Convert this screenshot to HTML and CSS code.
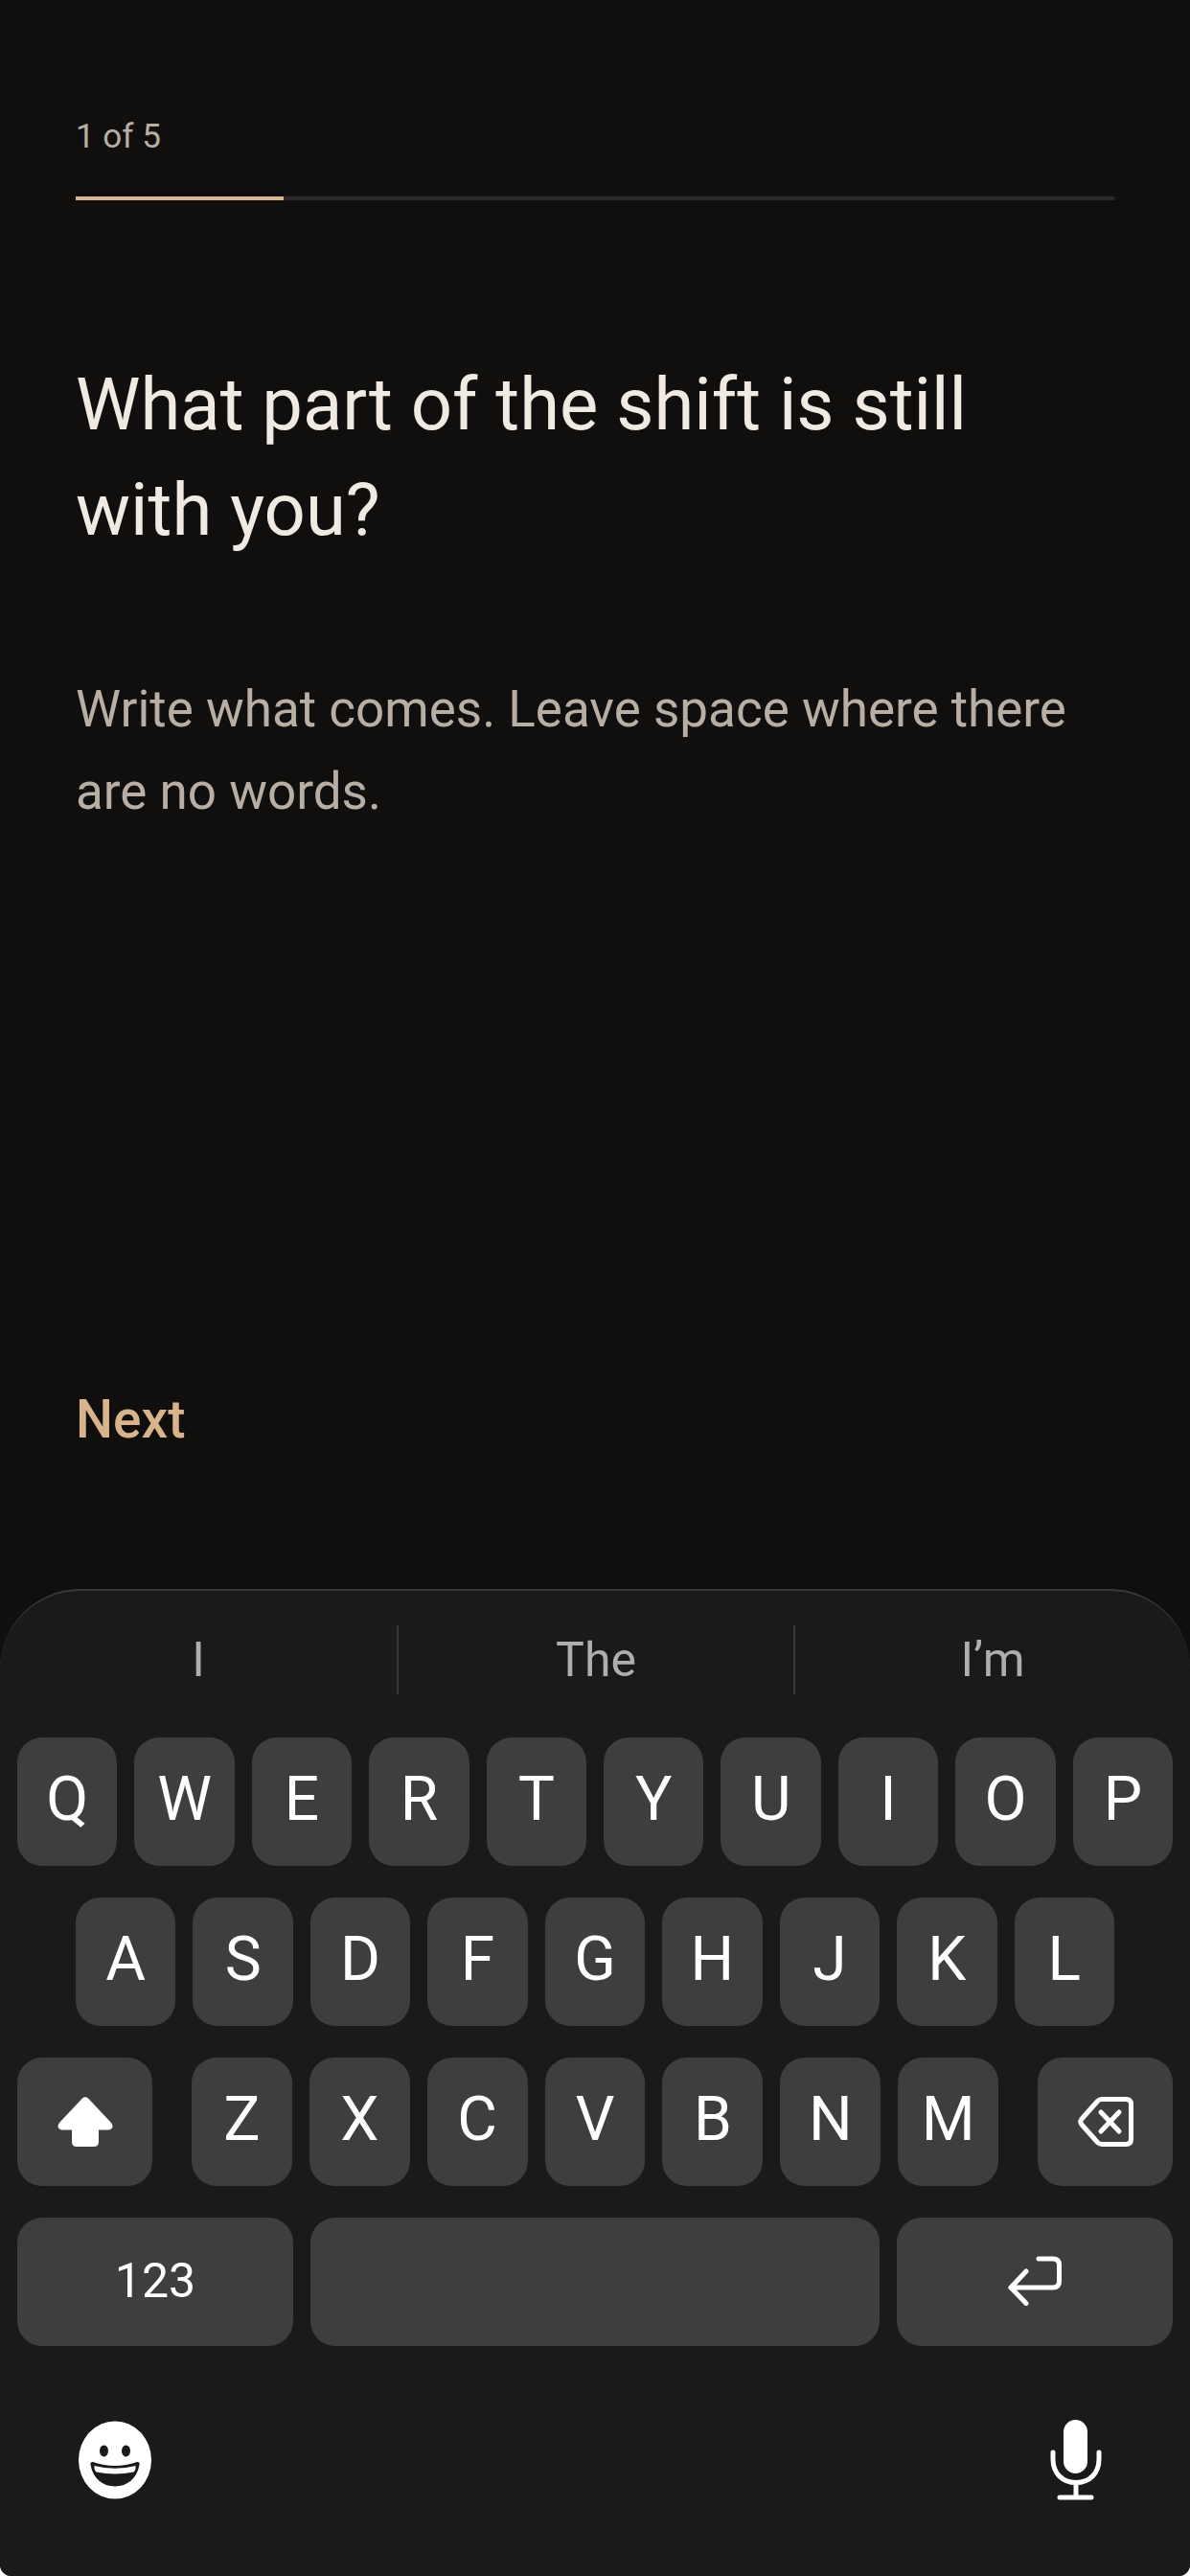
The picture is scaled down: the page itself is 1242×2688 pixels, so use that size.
FILE: index.html
```html
<!DOCTYPE html>
<html lang="en">
<head>
    <meta charset="UTF-8">
    <meta name="viewport" content="width=device-width, initial-scale=1.0">
    <title>Reflection</title>
    <link rel="stylesheet" href="styles.css">
</head>
<body>
    <div class="screen">
        <main class="content">
            <div class="step" id="step">1 of 5</div>
            <div class="progress" role="progressbar" aria-labelledby="step" aria-valuemin="0" aria-valuemax="5" aria-valuenow="1">
                <div class="progress-fill" style="width: 20%"></div>
            </div>

            <h1><label for="answer">What part of the shift is still with you?</label></h1>

            <textarea class="answer" id="answer" placeholder="Write what comes. Leave space where there are no words."></textarea>

            <button class="next" type="button">Next</button>
        </main>

        <div class="keyboard">
            <div class="suggestions">
                <button type="button">I</button>
                <button type="button">The</button>
                <button type="button">I’m</button>
            </div>

            <div class="keys">
                <div class="key-row">
                    <button class="key">Q</button>
                    <button class="key">W</button>
                    <button class="key">E</button>
                    <button class="key">R</button>
                    <button class="key">T</button>
                    <button class="key">Y</button>
                    <button class="key">U</button>
                    <button class="key">I</button>
                    <button class="key">O</button>
                    <button class="key">P</button>
                </div>
                <div class="key-row key-row-inset">
                    <button class="key">A</button>
                    <button class="key">S</button>
                    <button class="key">D</button>
                    <button class="key">F</button>
                    <button class="key">G</button>
                    <button class="key">H</button>
                    <button class="key">J</button>
                    <button class="key">K</button>
                    <button class="key">L</button>
                </div>
                <div class="key-row-shift">
                    <button class="key key-icon" aria-label="Shift">
                        <svg width="58" height="52" viewBox="0 0 58 52">
                            <path d="M26 1.5Q29-1 32 1.5L56 27Q59 31 56 33.5Q55 34.500 53 34.500H43V47Q43 52 38 52H20Q15 52 15 47V34.500H5Q3 34.500 2 33.500Q-1 31 2 27Z" fill="#fff"/>
                        </svg>
                    </button>
                    <div class="key-row">
                        <button class="key">Z</button>
                        <button class="key">X</button>
                        <button class="key">C</button>
                        <button class="key">V</button>
                        <button class="key">B</button>
                        <button class="key">N</button>
                        <button class="key">M</button>
                    </div>
                    <button class="key key-icon" aria-label="Delete">
                        <svg width="58" height="52" viewBox="0 0 58 52" fill="none" stroke="#fff" stroke-width="5" stroke-linecap="round" stroke-linejoin="round">
                            <path d="M25 2.500H50Q55.500 2.500 55.500 8V44Q55.500 49.500 50 49.500H25Q22.500 49.500 20.500 47.500L4 29Q1.500 26 4 23L20.500 4.500Q22.500 2.500 25 2.500Z"/>
                            <path d="M24 16L43 36M43 16L24 36"/>
                        </svg>
                    </button>
                </div>
                <div class="key-row-space">
                    <button class="key key-numbers">123</button>
                    <button class="key" aria-label="Space"></button>
                    <button class="key key-return" aria-label="Return">
                        <svg width="56" height="52" viewBox="0 0 56 52" fill="none" stroke="#fff" stroke-width="5" stroke-linecap="round" stroke-linejoin="round">
                            <path d="M32 3H47Q53.500 3 53.500 9.500V26.500Q53.500 33 47 33H3"/>
                            <path d="M19 16L3 33L19 49.500"/>
                        </svg>
                    </button>
                </div>
            </div>

            <div class="bottom-bar">
                <button type="button" aria-label="Emoji">
                    <svg width="76" height="82" viewBox="0 0 76 82">
                        <ellipse cx="38" cy="41" rx="38" ry="40.500" fill="#fff"/>
                        <ellipse cx="26.500" cy="31.500" rx="4.500" ry="6" fill="#1a1a1a"/>
                        <ellipse cx="49.500" cy="31.500" rx="4.500" ry="6" fill="#1a1a1a"/>
                        <path d="M15 43Q38 51 61 43Q64 42.500 63.500 46C61 60 51 68.500 38 68.500S15 60 12.500 46Q12 42.500 15 43Z" fill="#1a1a1a"/>
                        <path d="M16.500 47Q38 52.500 59.500 47Q60 51 57.500 53.500Q38 57.500 18.500 53.500Q16 51 16.500 47Z" fill="#fff"/>
                    </svg>
                </button>
                <button type="button" aria-label="Dictate">
                    <svg width="54" height="84" viewBox="0 0 54 84" fill="none" stroke="#fff" stroke-width="5" stroke-linecap="round">
                        <rect x="14" y="0" width="25" height="56" rx="12.500" fill="#fff" stroke="none"/>
                        <path d="M3 34V41C3 56 13 65.500 27 65.500S51 56 51 41V34M27 66V80M10 81H43"/>
                    </svg>
                </button>
            </div>
        </div>
    </div>
</body>
</html>
```
FILE: styles.css
```css
* {
    box-sizing: border-box;
}
body {
    margin: 0;
    background-color: #fff;
    font-family: Roboto, "Liberation Sans", sans-serif;
}
button {
    font-family: inherit;
    border: none;
    padding: 0;
    background: none;
    cursor: pointer;
}
svg {
    display: block;
}
.screen {
    display: flex;
    flex-direction: column;
    min-height: 100vh;
    background-color: #110f0d;
    border-radius: 0 0 12px 12px;
    overflow: hidden;
}
.content {
    flex: 1;
    display: flex;
    flex-direction: column;
    align-items: flex-start;
    padding: 121px 79px 142px;
}
.step {
    font-size: 35px;
    line-height: 44px;
    color: #b8aea4;
}
.progress {
    width: 100%;
    height: 4px;
    margin-top: 40px;
    background-color: #2b2a28;
}
.progress-fill {
    height: 100%;
    background-color: #d8b690;
}
h1 {
    margin: 158px 0 0;
    font-size: 76px;
    line-height: 110px;
    font-weight: 400;
    color: #f0eae2;
}
.answer {
    flex: 1;
    width: 100%;
    margin-top: 110px;
    padding: 0;
    border: none;
    outline: none;
    resize: none;
    background: none;
    font-family: inherit;
    font-size: 53px;
    line-height: 86px;
    color: #f0eae2;
}
.answer::placeholder {
    color: #b8aea4;
    opacity: 1;
}
.next {
    font-size: 55px;
    line-height: 70px;
    font-weight: 500;
    color: #d8b48c;
}
.keyboard {
    padding: 36px 18px 79px;
    background-color: #1a1a1a;
    border-top: 2px solid #3a3938;
    border-radius: 84px 84px 0 0;
}
.suggestions {
    display: grid;
    grid-template-columns: repeat(3, 1fr);
    height: 72px;
    margin: 0 -18px 45px;
}
.suggestions button {
    font-size: 50px;
    color: #b0aeac;
}
.suggestions button + button {
    border-left: 2px solid #383838;
}
.keys {
    display: grid;
    gap: 33px;
}
.key-row {
    display: flex;
    gap: 18px;
}
.key-row-inset {
    padding: 0 61px;
}
.key-row-shift {
    display: grid;
    grid-template-columns: 141fr 842fr 141fr;
    gap: 41px;
}
.key-row-space {
    display: grid;
    grid-template-columns: 288fr 594fr 288fr;
    gap: 18px;
}
.key {
    flex: 1;
    display: flex;
    align-items: center;
    justify-content: center;
    height: 134px;
    padding-bottom: 6px;
    border-radius: 26px;
    background-color: #3e3e3e;
    font-size: 64px;
    color: #fff;
}
.key-icon {
    padding-bottom: 0;
}
.key-numbers,
.key-return {
    padding-bottom: 2px;
    font-size: 50px;
}
.bottom-bar {
    display: flex;
    justify-content: space-between;
    align-items: center;
    padding: 77px 74px 0 64px;
}
```
